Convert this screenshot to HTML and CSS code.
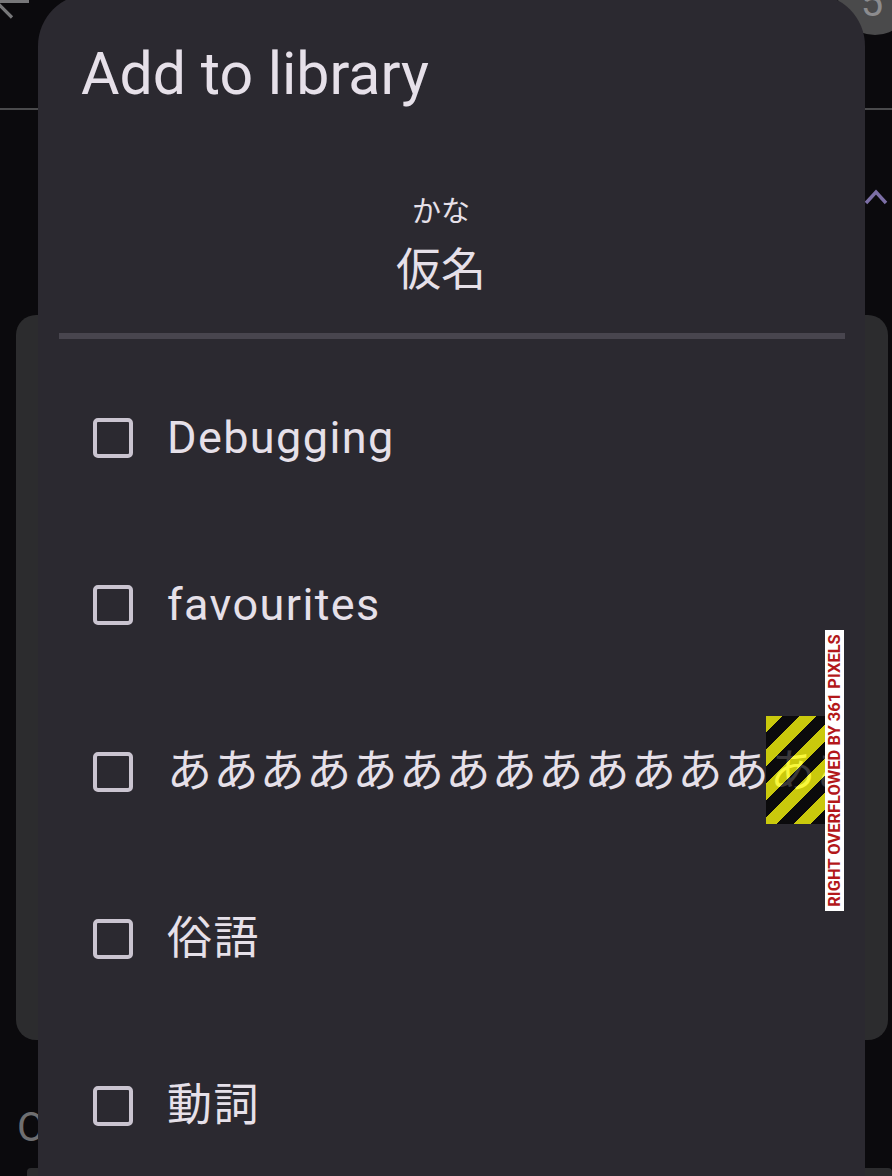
FILE: index.html
```html
<!DOCTYPE html>
<html lang="ja">
<head>
<meta charset="utf-8">
<title>Add to library</title>
<link rel="stylesheet" href="styles.css">
</head>
<body>
<div class="page">
  <header class="appbar">
    <svg class="back" width="40" height="24" viewBox="0 0 40 24" aria-hidden="true">
      <path d="M0 1.5 H29 M-4 1.5 L12 17.5" stroke="#777779" stroke-width="3.2" fill="none"/>
    </svg>
    <div class="avatar"><span>5</span></div>
  </header>
  <main class="content">
    <div class="chevron-row">
      <svg class="chevron" width="24" height="20" viewBox="0 0 24 20" aria-hidden="true">
        <path d="M2 17 L12 6 L22 17" stroke="#7c6fa6" stroke-width="3.4" fill="none"/>
      </svg>
    </div>
    <div class="card"></div>
    <div class="section-title">O</div>
    <div class="card small"></div>
  </main>
</div>

<div class="dialog" role="dialog" aria-label="Add to library">
  <h1 class="dialog-title">Add to library</h1>
  <div class="kana">
    <div class="furigana">かな</div>
    <div class="word">仮名</div>
  </div>
  <div class="divider"></div>
  <ul class="list">
    <li class="row"><span class="check"></span><span class="label">Debugging</span></li>
    <li class="row"><span class="check"></span><span class="label">favourites</span></li>
    <li class="row overflow"><span class="check"></span><span class="label">ああああああああああああああああああああああ</span>
      <span class="stripes"></span>
      <span class="overflow-tag"><span>RIGHT OVERFLOWED BY 361 PIXELS</span></span>
    </li>
    <li class="row"><span class="check"></span><span class="label">俗語</span></li>
    <li class="row"><span class="check"></span><span class="label">動詞</span></li>
  </ul>
</div>
</body>
</html>
```

FILE: styles.css
```css
* { box-sizing: border-box; }

html, body {
  margin: 0;
  padding: 0;
}

body {
  width: 892px;
  height: 1176px;
  overflow: hidden;
  background: #0b0a0d;
  font-family: Roboto, "Noto Sans CJK JP", sans-serif;
}

.page {
  width: 892px;
}

.appbar {
  height: 110px;
  border-bottom: 2px solid #4a4a4c;
  display: flex;
  justify-content: space-between;
  align-items: flex-start;
}

.back {
  display: block;
  overflow: visible;
}

.avatar {
  width: 74px;
  height: 74px;
  margin-top: -39px;
  margin-right: -20px;
  border-radius: 50%;
  background: #4a4a4b;
  display: flex;
  align-items: center;
  justify-content: center;
  color: #8c8c8e;
  font-size: 40px;
}

.avatar span {
  margin-left: -6px;
  margin-top: 8px;
}

.content {
  display: flex;
  flex-direction: column;
}

.chevron-row {
  display: flex;
  justify-content: flex-end;
  padding-right: 4px;
  margin-top: 76px;
  height: 20px;
}

.chevron { display: block; }

.card {
  margin: 109px 4px 0 16px;
  height: 725px;
  border-radius: 20px;
  background: #2c2c2e;
}

.section-title {
  margin: 63px 0 0 17px;
  font-size: 41px;
  line-height: 48px;
  color: #6f6f71;
}

.card.small {
  margin: 17px 0 0 27px;
  height: 60px;
  border-radius: 4px;
}

/* Dialog overlays the page */
.dialog {
  position: fixed;
  left: 38px;
  top: -6px;
  width: 827px;
  height: 1300px;
  border-radius: 52px 52px 0 0;
  background: #2b2930;
  color: #e6e0e9;
  padding-top: 44px;
}

.dialog-title {
  margin: 0;
  padding-left: 43px;
  font-weight: 400;
  font-size: 59px;
  line-height: 71px;
  color: #e6e0e9;
  font-family: Roboto, sans-serif;
}

.kana {
  margin-top: 80px;
  padding-right: 21px;
  display: flex;
  flex-direction: column;
  align-items: center;
  font-family: "Noto Sans CJK JP", sans-serif;
  color: #e6e0e9;
}

.furigana {
  font-size: 29px;
  line-height: 40px;
}

.word {
  margin-top: 11px;
  font-size: 45px;
  line-height: 54px;
}

.divider {
  margin: 39px 20px 0 21px;
  height: 6px;
  background: #48454e;
}

.list {
  list-style: none;
  margin: 0;
  padding: 15px 40px 0 0;
}

.row {
  position: relative;
  height: 167px;
  display: flex;
  align-items: center;
  padding-left: 55px;
}

.check {
  flex: none;
  width: 40px;
  height: 40px;
  border: 4px solid #cac4d0;
  border-radius: 5px;
}

.label {
  flex: 1;
  min-width: 0;
  margin-left: 34px;
  white-space: nowrap;
  overflow: hidden;
  font-family: Roboto, "Noto Sans CJK JP", sans-serif;
  font-size: 45px;
  letter-spacing: 1.4px;
  line-height: 60px;
  color: #e6e0e9;
}

.stripes {
  position: absolute;
  right: 0;
  top: 28px;
  width: 59px;
  height: 108px;
  background: repeating-linear-gradient(135deg,
    rgba(255, 255, 0, 0.75) 0 12px,
    rgba(0, 0, 0, 0.75) 12px 24px);
}

.overflow-tag {
  position: absolute;
  left: 100%;
  top: -58px;
  width: 19px;
  height: 281px;
  background: #ffffff;
  display: flex;
  align-items: center;
  justify-content: center;
  overflow: hidden;
}

.overflow-tag span {
  display: block;
  transform: rotate(-90deg);
  white-space: nowrap;
  font-family: Roboto, sans-serif;
  font-weight: 700;
  font-size: 16.5px;
  line-height: 19px;
  color: #b3181a;
  letter-spacing: 0;
}
```
